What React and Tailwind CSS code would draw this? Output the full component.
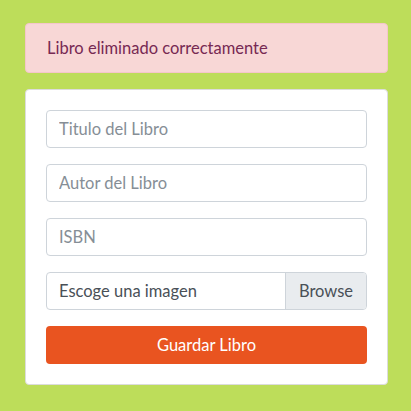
export default function App() {
  return (
    <div className="min-h-[411px] bg-[#bddd5a] pl-[25px] pr-[23px] pt-[23px] pb-[26px] font-['Lato','Open_Sans',sans-serif] text-[16.5px]">
      <div className="flex h-[50px] items-center rounded border border-[#f5c6cb] bg-[#f8d7d6] px-[21px] text-[#772953]">
        Libro eliminado correctamente
      </div>
      <div className="mt-[16px] rounded border border-[#dcdcdc] bg-white p-[20px]">
        <form className="flex flex-col gap-[16px]">
          <input
            type="text"
            placeholder="Titulo del Libro"
            className="h-[38px] w-full rounded border border-[#ced4da] px-[12px] text-[#495057] placeholder:text-[#868e96]"
          />
          <input
            type="text"
            placeholder="Autor del Libro"
            className="h-[38px] w-full rounded border border-[#ced4da] px-[12px] text-[#495057] placeholder:text-[#868e96]"
          />
          <input
            type="text"
            placeholder="ISBN"
            className="h-[38px] w-full rounded border border-[#ced4da] px-[12px] text-[#495057] placeholder:text-[#868e96]"
          />
          <div className="flex h-[38px] overflow-hidden rounded border border-[#ced4da] text-[#495057]">
            <span className="flex flex-1 items-center px-[12px]">Escoge una imagen</span>
            <span className="flex w-[81px] items-center justify-center border-l border-[#ced4da] bg-[#e9ecef]">Browse</span>
          </div>
          <button
            type="button"
            className="h-[38px] w-full rounded bg-[#e95420] text-white"
          >
            Guardar Libro
          </button>
        </form>
      </div>
    </div>
  );
}
